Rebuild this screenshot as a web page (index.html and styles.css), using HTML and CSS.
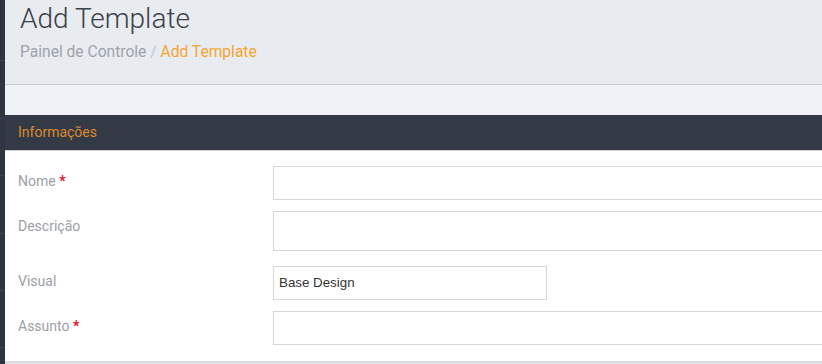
FILE: index.html
```html
<!DOCTYPE html>
<html lang="pt">
<head>
<meta charset="utf-8">
<title>Add Template</title>
<link rel="stylesheet" href="styles.css">
</head>
<body>
<div class="layout">
  <aside class="sidebar">
    <div class="side-item"></div>
    <div class="side-item"></div>
    <div class="side-item"></div>
    <div class="side-item"></div>
    <div class="side-item"></div>
    <div class="side-item"></div>
  </aside>
  <main class="main">
    <header class="page-header">
      <h1 class="page-title">Add Template</h1>
      <nav class="breadcrumb"><span class="crumb">Painel de Controle</span><span class="sep"> / </span><span class="crumb-active">Add Template</span></nav>
    </header>
    <div class="spacer"></div>
    <section class="panel">
      <div class="panel-heading">Informações</div>
      <div class="panel-body">
        <div class="form-row">
          <label class="form-label">Nome <span class="req">*</span></label>
          <div class="form-control"><input class="input input-wide" type="text"></div>
        </div>
        <div class="form-row row-desc">
          <label class="form-label">Descrição</label>
          <div class="form-control"><input class="input input-wide input-tall" type="text"></div>
        </div>
        <div class="form-row row-visual">
          <label class="form-label">Visual</label>
          <div class="form-control"><div class="input input-select">Base Design</div></div>
        </div>
        <div class="form-row">
          <label class="form-label">Assunto <span class="req">*</span></label>
          <div class="form-control"><input class="input input-wide" type="text"></div>
        </div>
      </div>
    </section>
  </main>
</div>
</body>
</html>
```

FILE: styles.css
```css
* { box-sizing: border-box; }
html, body { margin: 0; padding: 0; }
body {
  font-family: Roboto, "Liberation Sans", sans-serif;
  background: #e4e5e8;
  overflow: hidden;
  width: 822px;
  height: 364px;
}
.layout {
  display: flex;
  height: 364px;
  overflow: hidden;
}
.sidebar {
  width: 5px;
  flex: 0 0 5px;
  background: #2e3440;
  padding-top: 4px;
  overflow: hidden;
}
.side-item {
  height: 57.4px;
  border-bottom: 1px solid #3d4350;
}
.main {
  flex: 1;
  min-width: 0;
  display: flex;
  flex-direction: column;
  background: #eff2f7;
  overflow: hidden;
}
.page-header {
  flex: 0 0 85px;
  background: #e8ebf0;
  border-bottom: 1px solid #c5c8ce;
  height: 85px;
  padding: 3px 15px 0;
}
.page-title {
  margin: 0;
  font-size: 28px;
  font-weight: 300;
  line-height: 32px;
  color: #3c404a;
}
.breadcrumb {
  margin-top: 7px;
  font-size: 15.6px;
  line-height: 20px;
  color: #9ea3ad;
}
.sep { color: #c3c6cc; }
.crumb-active { color: #f5a531; }
.spacer { height: 30px; flex: 0 0 30px; }
.panel {
  background: #fff;
  border-bottom: 3px solid #dcdde0;
  flex: 0 0 auto;
}
.panel-heading {
  background: #333a46;
  height: 36px;
  padding: 0 13px;
  font-size: 14px;
  line-height: 34px;
  color: #d98a2b;
  border-bottom: 1px solid #cfd1d6;
}
.panel-body {
  padding: 15px 0 16px 13px;
}
.form-row {
  display: flex;
  align-items: flex-start;
  margin-bottom: 11px;
}
.form-row:last-child { margin-bottom: 0; }
.row-desc { margin-bottom: 16px; }
.form-label {
  width: 255px;
  flex: 0 0 255px;
  font-size: 14px;
  line-height: 20px;
  padding-top: 5px;
  color: #9b9ea5;
}
.req { color: #e0112b; font-weight: 700; }
.form-control { flex: 1; min-width: 0; overflow: hidden; }
.input {
  display: block;
  height: 34px;
  border: 1px solid #d6d6dc;
  background: #fff;
  margin: 0;
  padding: 0 5px;
  font-family: "Liberation Sans", Arial, sans-serif;
  font-size: 13.33px;
  color: #333;
  outline: none;
}
.input-wide { width: 600px; }
.input-tall { height: 40px; }
.row-desc .input-tall { height: 40px; }
.row-desc { margin-bottom: 15px; }
.input-select {
  width: 274px;
  line-height: 32px;
}
```
